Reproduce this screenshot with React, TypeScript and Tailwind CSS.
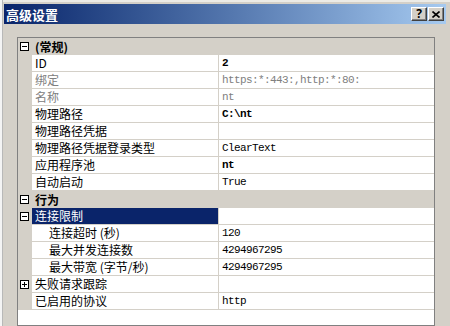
import React from "react";

type Row = {
  cat?: boolean;
  name: string;
  value?: string;
  bold?: boolean;
  dim?: boolean;
  indent?: boolean;
  toggle?: "-" | "+";
  selected?: boolean;
};

const rows: Row[] = [
  { cat: true, name: "(常规)", toggle: "-" },
  { name: "ID", value: "2", bold: true },
  { name: "绑定", value: "https:*:443:,http:*:80:", dim: true },
  { name: "名称", value: "nt", dim: true },
  { name: "物理路径", value: "C:\\nt", bold: true },
  { name: "物理路径凭据", value: "" },
  { name: "物理路径凭据登录类型", value: "ClearText" },
  { name: "应用程序池", value: "nt", bold: true },
  { name: "自动启动", value: "True" },
  { cat: true, name: "行为", toggle: "-" },
  { name: "连接限制", value: "", toggle: "-", selected: true },
  { name: "连接超时 (秒)", value: "120", indent: true },
  { name: "最大并发连接数", value: "4294967295", indent: true },
  { name: "最大带宽 (字节/秒)", value: "4294967295", indent: true },
  { name: "失败请求跟踪", value: "", toggle: "+" },
  { name: "已启用的协议", value: "http" },
];

const cjk = { fontFamily: '"Noto Sans CJK SC", "Noto Sans", sans-serif' };
const mono = { fontFamily: '"Liberation Mono", "DejaVu Sans Mono", monospace' };

function Toggle({ sign }: { sign: "-" | "+" }) {
  return (
    <svg width="9" height="9" viewBox="0 0 9 9" className="block">
      <rect x="0.5" y="0.5" width="8" height="8" fill="white" stroke="black" />
      <line x1="2" y1="4.5" x2="7" y2="4.5" stroke="black" />
      {sign === "+" && <line x1="4.5" y1="2" x2="4.5" y2="7" stroke="black" />}
    </svg>
  );
}

function TitleButton({ children }: { children: React.ReactNode }) {
  return (
    <div className="w-[16px] h-[14px] bg-[#d4d0c8] border-t border-l border-white border-r border-b border-r-[#404040] border-b-[#404040] shadow-[inset_-1px_-1px_0_#808080] flex items-center justify-center text-black font-bold text-[12px] leading-none">
      {children}
    </div>
  );
}

function GridRow({ r }: { r: Row }) {
  return (
    <div className="flex h-[17px]">
      <div className="w-[14px] bg-[#d4d0c8] flex items-center justify-center pr-[1px]">
        {r.toggle && <Toggle sign={r.toggle} />}
      </div>
      {r.cat ? (
        <div
          className="flex-1 bg-[#d4d0c8] pl-[3px] text-[12px] font-bold leading-[17px] text-black"
          style={cjk}
        >
          {r.name}
        </div>
      ) : (
        <>
          <div
            className={`w-[186px] h-[17px] border-b border-[#d4d0c8] text-[12px] leading-[16px] whitespace-nowrap ${
              r.indent ? "pl-[17px]" : "pl-[3px]"
            } ${
              r.selected
                ? "bg-[#0a246a] text-white"
                : r.dim
                ? "bg-white text-[#808080]"
                : "bg-white text-black"
            }`}
            style={cjk}
          >
            {r.name}
          </div>
          <div className="w-[1px] bg-[#d4d0c8]" />
          <div
            className={`flex-1 h-[17px] bg-white border-b border-[#d4d0c8] pl-[3px] text-[11px] tracking-[-0.6px] leading-[16px] whitespace-nowrap ${
              r.bold ? "font-bold text-black" : r.dim ? "text-[#808080]" : "text-black"
            }`}
            style={mono}
          >
            {r.value}
          </div>
        </>
      )}
    </div>
  );
}

export default function App() {
  return (
    <div className="w-[450px] h-[326px] flex overflow-hidden bg-[#d4d0c8]">
      <div className="w-[3px] h-full bg-[#f4f4f4] border-r border-[#b8b8b8]" />
      <div className="flex-1 flex flex-col pt-[2px] pl-[1px] border-t-2 border-[#ecebe6]">
        <div className="w-[442px] h-[20px] bg-gradient-to-r from-[#0a246a] to-[#a6caf0] flex items-center justify-between pl-[2px] pr-[2px]">
          <span className="text-white font-bold text-[13px] leading-none" style={cjk}>
            高级设置
          </span>
          <div className="flex gap-[1px] items-center">
            <TitleButton>?</TitleButton>
            <TitleButton>
              <svg width="8" height="7" viewBox="0 0 8 7">
                <path d="M0.5 0.5 L7.5 6.5 M7.5 0.5 L0.5 6.5" stroke="black" strokeWidth="1.6" />
              </svg>
            </TitleButton>
          </div>
        </div>
        <div className="ml-[13px] mt-[13px] w-[418px] flex-1 border border-[#808080] bg-white">
          {rows.map((r, i) => (
            <GridRow key={i} r={r} />
          ))}
        </div>
      </div>
    </div>
  );
}
